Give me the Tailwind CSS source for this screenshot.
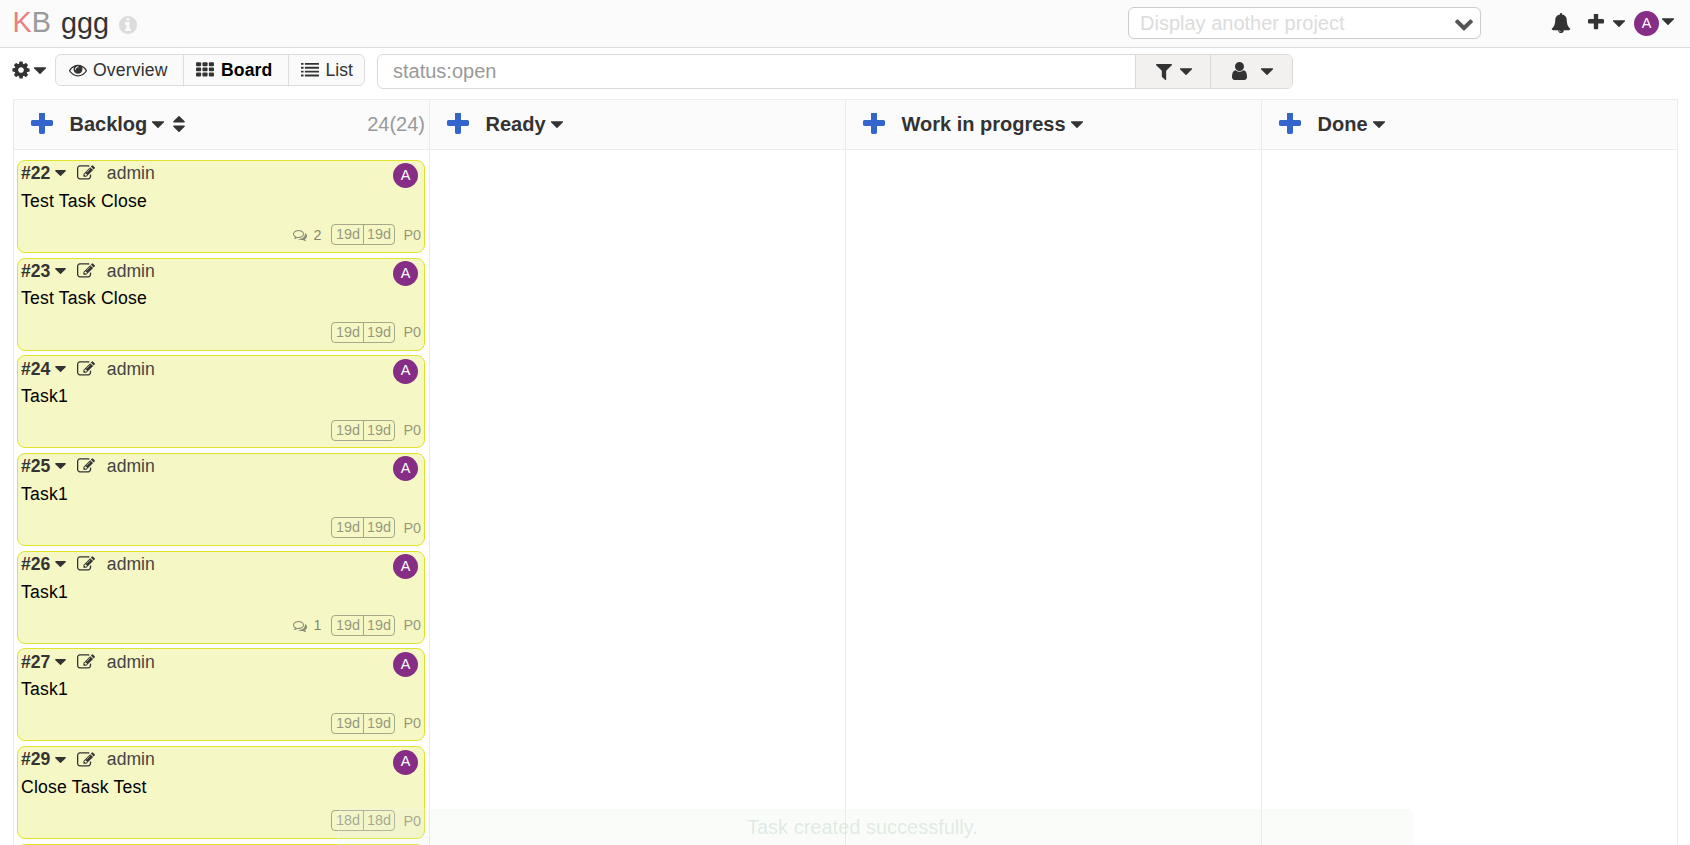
<!DOCTYPE html>
<html lang="en">
<head>
<meta charset="utf-8">
<title>ggg</title>
<script src="https://cdn.jsdelivr.net/npm/@tailwindcss/browser@4"></script>
</head>
<body class="relative h-[845px] overflow-hidden bg-white font-['Liberation_Sans',Arial,sans-serif] text-[20px] text-[#333]">
<svg class="hidden" xmlns="http://www.w3.org/2000/svg">
<symbol id="cog" viewBox="0 0 1792 1792"><path d="M1152 896q0-106-75-181t-181-75-181 75-75 181 75 181 181 75 181-75 75-181zm512-109v222q0 12-8 23t-20 13l-185 28q-19 54-39 91 35 50 107 138 10 12 10 25t-9 23q-27 37-99 108t-94 71q-12 0-26-9l-138-108q-44 23-91 38-16 136-29 186-7 28-36 28h-222q-14 0-24.5-8.5t-11.5-21.5l-28-184q-49-16-90-37l-141 107q-10 9-25 9-14 0-25-11-126-114-165-168-7-10-7-23 0-12 8-23 15-21 51-66.5t54-70.5q-27-50-41-99l-183-27q-13-2-21-12.5t-8-23.5v-222q0-12 8-23t19-13l186-28q14-46 39-92-40-57-107-138-10-12-10-24 0-10 9-23 26-36 98.5-107.5t94.5-71.5q13 0 26 10l138 107q44-23 91-38 16-136 29-186 7-28 36-28h222q14 0 24.5 8.5t11.5 21.5l28 184q49 16 90 37l142-107q9-9 24-9 13 0 25 10 129 119 165 170 7 8 7 22 0 12-8 23-15 21-51 66.5t-54 70.5q26 50 41 98l183 28q13 2 21 12.5t8 23.5z"/></symbol>
<symbol id="eye" viewBox="0 0 1792 1792"><path d="M1664 960q-152-236-381-353 61 104 61 225 0 185-131.5 316.5t-316.5 131.5-316.5-131.5-131.5-316.5q0-121 61-225-229 117-381 353 133 205 333.5 326.5t434.5 121.5 434.5-121.5 333.5-326.5zm-720-384q0-20-14-34t-34-14q-125 0-214.5 89.5t-89.5 214.5q0 20 14 34t34 14 34-14 14-34q0-86 61-147t147-61q20 0 34-14t14-34zm848 384q0 34-20 69-140 230-376.5 368.5t-499.5 138.5-499.5-139-376.5-368q-20-35-20-69t20-69q140-229 376.5-368t499.5-139 499.5 139 376.5 368q20 35 20 69z"/></symbol>
<symbol id="th" viewBox="0 0 1792 1792"><g id="thr"><rect y="1152" width="512" height="384" rx="96"/><rect x="640" y="1152" width="512" height="384" rx="96"/><rect x="1280" y="1152" width="512" height="384" rx="96"/></g><use href="#thr" y="-512"/><use href="#thr" y="-1024"/></symbol>
<symbol id="list" viewBox="0 0 1792 1792"><g id="lr"><rect y="1344" width="256" height="192" rx="32"/><rect x="384" y="1344" width="1408" height="192" rx="32"/></g><use href="#lr" y="-384"/><use href="#lr" y="-768"/><use href="#lr" y="-1152"/></symbol>
<symbol id="bell" viewBox="0 0 1792 1792"><path d="M912 1696q0-16-16-16-59 0-101.5-42.5t-42.5-101.5q0-16-16-16t-16 16q0 73 51.5 124.5t124.5 51.5q16 0 16-16zm816-288q0 52-38 90t-90 38h-448q0 106-75 181t-181 75-181-75-75-181h-448q-52 0-90-38t-38-90q50-42 91-88t85-119.5 74.5-158.5 50-206 19.5-260q0-152 117-282.5t307-158.5q-8-19-8-39 0-40 28-68t68-28 68 28 28 68q0 20-8 39 190 28 307 158.5t117 282.5q0 139 19.5 260t50 206 74.5 158.5 85 119.5 91 88z"/></symbol>
<symbol id="plus" viewBox="192 192 1408 1408"><path d="M1600 736v192q0 40-28 68t-68 28h-416v416q0 40-28 68t-68 28h-192q-40 0-68-28t-28-68v-416h-416q-40 0-68-28t-28-68v-192q0-40 28-68t68-28h416v-416q0-40 28-68t68-28h192q40 0 68 28t28 68v416h416q40 0 68 28t28 68z"/></symbol>
<symbol id="caret" viewBox="384 640 1024 576"><path d="M1408 704q0 26-19 45l-448 448q-19 19-45 19t-45-19l-448-448q-19-19-19-45t19-45 45-19h896q26 0 45 19t19 45z"/></symbol>
<symbol id="sort" viewBox="384 192 1024 1408"><path d="M1408 1088q0 26-19 45l-448 448q-19 19-45 19t-45-19l-448-448q-19-19-19-45t19-45 45-19h896q26 0 45 19t19 45zm0-384q0 26-19 45t-45 19h-896q-26 0-45-19t-19-45 19-45l448-448q19-19 45-19t45 19l448 448q19 19 19 45z"/></symbol>
<symbol id="filter" viewBox="192 256 1408 1408"><path d="M1595 295q17 41-14 70l-493 493v742q0 42-39 59-13 5-25 5-27 0-45-19l-256-256q-19-19-19-45v-486l-493-493q-31-29-14-70 17-39 59-39h1280q42 0 59 39z"/></symbol>
<symbol id="user" viewBox="256 128 1280 1536"><path d="M1536 1399q0 109-62.5 187t-150.5 78h-854q-88 0-150.5-78t-62.5-187q0-85 8.5-160.5t31.5-152 58.5-131 94-89 134.5-34.5q131 128 313 128t313-128q76 0 134.5 34.5t94 89 58.5 131 31.5 152 8.5 160.5zm-256-887q0 159-112.5 271.5t-271.5 112.5-271.5-112.5-112.5-271.5 112.5-271.5 271.5-112.5 271.5 112.5 112.5 271.5z"/></symbol>
<symbol id="chevron" viewBox="90 533 1612 1035"><path d="M1683 808l-742 741q-19 19-45 19t-45-19l-742-741q-19-19-19-45.5t19-45.5l166-165q19-19 45-19t45 19l531 531 531-531q19-19 45-19t45 19l166 165q19 19 19 45.5t-19 45.5z"/></symbol>
<symbol id="info" viewBox="128 128 1536 1536"><path d="M1152 1376v-160q0-14-9-23t-23-9h-96v-512q0-14-9-23t-23-9h-320q-14 0-23 9t-9 23v160q0 14 9 23t23 9h96v320h-96q-14 0-23 9t-9 23v160q0 14 9 23t23 9h448q14 0 23-9t9-23zm-128-896v-160q0-14-9-23t-23-9h-192q-14 0-23 9t-9 23v160q0 14 9 23t23 9h192q14 0 23-9t9-23zm640 416q0 209-103 385.5t-279.5 279.5-385.5 103-385.5-103-279.5-279.5-103-385.5 103-385.5 279.5-279.5 385.5-103 385.5 103 279.5 279.5 103 385.5z"/></symbol>
<symbol id="edit" viewBox="0 0 1792 1792"><path d="M888 1184l116-116-152-152-116 116v56h96v96h56zm440-720q-16-16-33 1l-350 350q-17 17-1 33t33-1l350-350q17-17 1-33zm80 594v190q0 119-84.5 203.5t-203.5 84.5h-832q-119 0-203.5-84.5t-84.5-203.5v-832q0-119 84.5-203.5t203.5-84.5h832q63 0 117 25 15 7 18 23 3 17-9 29l-49 49q-14 14-32 8-23-6-45-6h-832q-66 0-113 47t-47 113v832q0 66 47 113t113 47h832q66 0 113-47t47-113v-126q0-13 9-22l64-64q15-15 35-7t20 29zm-96-738l288 288-672 672h-288v-288zm444 132l-92 92-288-288 92-92q28-28 68-28t68 28l152 152q28 28 28 68t-28 68z"/></symbol>
<symbol id="comments" viewBox="0 0 1792 1792"><path d="M704 384q-153 0-286 52t-211.5 141-78.5 191q0 82 53 158t149 132l97 56-35 84q34-20 62-39l44-31 53 10q78 14 153 14 153 0 286-52t211.5-141 78.5-191-78.5-191-211.5-141-286-52zm0-128q191 0 353.5 68.5t256.5 186.5 94 257-94 257-256.5 186.5-353.5 68.5q-86 0-176-16-124 88-278 128-36 9-86 16h-3q-11 0-20.5-8t-11.5-21q-1-3-1-6.5t.5-6.5 2-6l2.5-5 3.5-5.5 4-5 4.5-5 4-4.5q5-6 23-25t26-29.5 22.5-29 25-38.5 20.5-44q-124-72-195-177t-71-224q0-139 94-257t256.5-186.5 353.5-68.5zm822 1169q10 24 20.5 44t25 38.5 22.5 29 26 29.5 23 25q1 1 4 4.5t4.5 5 4 5 3.5 5.5l2.5 5 2 6 .5 6.5-1 6.5q-3 14-13 22t-22 7q-50-7-86-16-154-40-278-128-90 16-176 16-271 0-472-132 58 4 88 4 161 0 309-45t264-129q125-92 192-212t67-254q0-77-23-152 129 71 204 178t75 230q0 120-71 224.5t-195 176.5z"/></symbol>
</svg>

<header class="flex h-12 items-start border-b border-[#dedede] bg-[#fbfbfb] pl-[12.5px]">
  <h1 class="flex items-start text-[28.8px] leading-[32px]">
    <span class="mt-[6px] text-[#9a9a9a]"><span class="text-[#e98080]">K</span>B</span>
    <span class="mt-[7px] ml-[10px]">ggg</span>
    <svg class="mt-[16px] ml-[10.5px] size-[18px] fill-[#dcdcdc]"><use href="#info"/></svg>
  </h1>
  <div class="mt-[7px] ml-auto flex h-8 w-[353px] items-center justify-between rounded-[6px] border border-[#ccc] bg-white pr-[7px] pl-[11px] text-[#dcdcdc]">
    <span>Display another project</span>
    <svg class="mt-[3px] h-[12px] w-[18px] fill-[#555]"><use href="#chevron"/></svg>
  </div>
  <div class="ml-[70px] flex w-[139px] items-start fill-[#333]">
    <svg class="mt-[13px] size-[20px]"><use href="#bell"/></svg>
    <svg class="mt-[14px] ml-[17px] size-[16px]"><use href="#plus"/></svg>
    <svg class="mt-[19.5px] ml-[8.5px] h-[7px] w-[12px]"><use href="#caret"/></svg>
    <span class="mt-[11px] ml-[9.5px] flex size-[25px] items-center justify-center rounded-full bg-[#862d85] text-[14.4px] text-white">A</span>
    <svg class="mt-[17.5px] ml-[3px] h-[7px] w-[12px]"><use href="#caret"/></svg>
  </div>
</header>

<nav class="flex h-[51px] items-start pt-[6px] pl-[11px] fill-[#333]">
  <svg class="mt-[6px] size-[20px]"><use href="#cog"/></svg>
  <svg class="mt-[13px] ml-[2.5px] h-[7px] w-[12px]"><use href="#caret"/></svg>
  <div class="ml-[9.5px] flex h-8 w-[310px] rounded-[6px] border border-[#ddd] bg-[#fafafa] text-[17.6px] leading-[30px]">
    <a class="flex w-[128px] items-center border-r border-[#ddd] pl-[13px] tracking-[.15px]"><svg class="mr-[6px] size-[18px]"><use href="#eye"/></svg>Overview</a>
    <a class="flex w-[105px] items-center border-r border-[#ddd] pl-[12px] font-bold tracking-[.1px] text-black"><svg class="mr-[7px] size-[18px]"><use href="#th"/></svg>Board</a>
    <a class="flex items-center pl-[12px]"><svg class="mr-[6.5px] size-[18px]"><use href="#list"/></svg>List</a>
  </div>
  <div class="ml-[12px] flex h-[35px] w-[916px] overflow-hidden rounded-[6px] border border-[#ded9d4]">
    <div class="w-[757px] pl-[15px] leading-[33px] text-[#999]">status:open</div>
    <div class="flex w-[75px] items-center border-l border-[#ded9d4] bg-[#f3f1f0] pl-[20px]"><svg class="size-[16px]"><use href="#filter"/></svg><svg class="ml-[8px] h-[7px] w-[12px]"><use href="#caret"/></svg></div>
    <div class="flex grow items-center border-l border-[#ded9d4] bg-[#f3f1f0] pl-[20.5px]"><svg class="mb-[1px] h-[18px] w-[15px]"><use href="#user"/></svg><svg class="ml-[14.5px] h-[7px] w-[12px]"><use href="#caret"/></svg></div>
  </div>
</nav>

<main class="ml-[13px] grid h-[746px] w-[1665px] grid-cols-4 grid-rows-[50px_696px] overflow-hidden border-t border-l border-[#ececec]" id="board"></main>

<div class="absolute top-[809px] left-[338px] h-[36px] w-[1075px] rounded-t-[5px] border border-b-0 border-[#fbf8f0]/40 bg-[#e8f2e8]/20 pt-[5px] pl-[408px] leading-[24px] text-[#8fb596]/25">Task created successfully.</div>

<script>
const columns = ['Backlog', 'Ready', 'Work in progress', 'Done'];
const tasks = [[22, 'Test Task Close', '19d', 2], [23, 'Test Task Close', '19d'], [24, 'Task1', '19d'], [25, 'Task1', '19d'], [26, 'Task1', '19d', 1], [27, 'Task1', '19d'], [29, 'Close Task Test', '18d']];
const heads = columns.map((name, i) => `
  <div class="flex items-center border-r border-b border-[#ececec] bg-[#fbfbfb] pr-[4px] pb-[1px] pl-[17px]">
    <svg class="mb-[1px] size-[22px] fill-[#36c]"><use href="#plus"/></svg>
    <b class="ml-[16.5px]">${name}</b>
    <svg class="ml-[5px] h-[7px] w-[12px] fill-[#333]"><use href="#caret"/></svg>
    ${i ? '' : '<svg class="ml-[8.5px] h-[16px] w-[12px] fill-[#333]"><use href="#sort"/></svg><span class="ml-auto text-[#999]">24(24)</span>'}
  </div>`).join('');
const cards = tasks.map(([id, title, age, comments]) => `
  <article class="relative mb-[4.7px] h-[93px] rounded-[8px] border border-[#dfe32d] bg-[#f5f7c4] pl-[3px] text-[17.6px]">
    <div class="flex h-[24.8px] items-center"><b>#${id}</b><svg class="ml-[5px] h-[6px] w-[11px] fill-[#333]"><use href="#caret"/></svg><svg class="ml-[11px] size-[18px] fill-[#333]"><use href="#edit"/></svg><span class="ml-[11.5px] text-[#444]">admin</span></div>
    <div class="mt-[4px] leading-[23px] tracking-[.2px] text-black">${title}</div>
    <span class="absolute top-[2.4px] right-[6px] flex size-[25px] items-center justify-center rounded-full bg-[#862d85] text-[14.4px] text-white">A</span>
    <div class="mt-[11.5px] flex h-[21px] items-center justify-end pr-[3px] text-[14.4px] text-[#333]/50">
      ${comments ? `<svg class="size-[14px] fill-[#333]/55"><use href="#comments"/></svg><span class="mr-[9.5px] ml-[6px] pt-[1px] text-[#333]/60">${comments}</span>` : ''}
      <span class="flex h-[21px] rounded-[4px] border border-[#333]/40 leading-[19px]"><span class="w-[32px] border-r border-[#333]/40 pl-[4px]">${age}</span><span class="w-[30px] pl-[3px]">${age}</span></span>
      <span class="ml-[8.5px] pt-[1px]">P0</span>
    </div>
  </article>`).join('');
const nextCard = '<div class="h-[93px] rounded-[8px] border border-[#dfe32d] bg-[#f5f7c4]"></div>';
document.getElementById('board').innerHTML = heads +
  `<section class="border-r border-[#ececec] pt-[10px] pr-[4px] pl-[3px]">${cards}${nextCard}</section>` +
  '<section class="border-r border-[#ececec]"></section>'.repeat(3);
</script>
</body>
</html>
